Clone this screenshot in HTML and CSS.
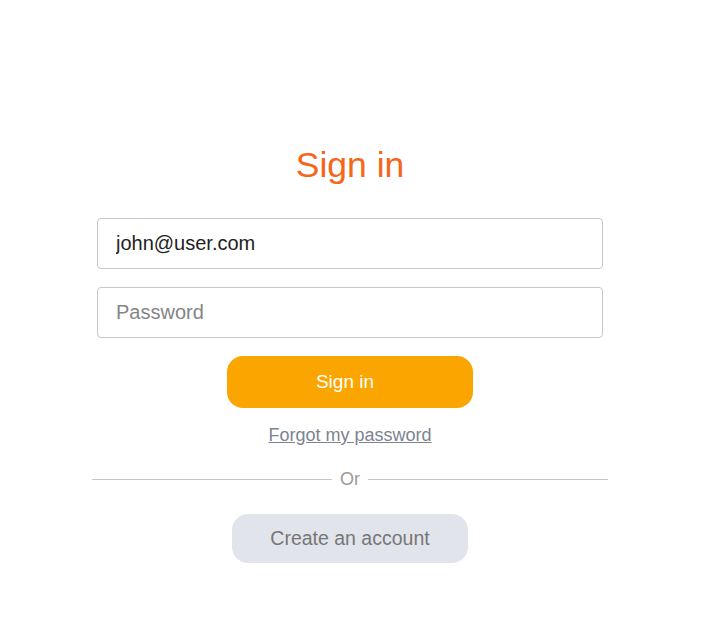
FILE: index.html
```html
<!DOCTYPE html>
<html lang="en">
<head>
  <meta charset="UTF-8">
  <meta name="viewport" content="width=device-width, initial-scale=1.0">
  <title>Sign in</title>
  <link rel="stylesheet" href="styles.css">
</head>
<body>
  <main class="login">
    <h1>Sign in</h1>

    <form class="login-form">
      <input type="email" class="field" value="john@user.com">
      <input type="password" class="field" placeholder="Password">
      <button type="button" class="btn-primary">Sign in</button>
    </form>

    <a href="#" class="forgot">Forgot my password</a>

    <div class="divider"><span>Or</span></div>

    <button type="button" class="btn-secondary">Create an account</button>
  </main>
</body>
</html>
```

FILE: styles.css
```css
body {
  margin: 0;
  font-family: "Liberation Sans", Arial, sans-serif;
  background: #fff;
}

.login {
  width: 516px;
  margin-left: 92px;
  padding-top: 143px;
  display: flex;
  flex-direction: column;
  align-items: center;
}

h1 {
  margin: 0 0 30px;
  font-size: 35.5px;
  font-weight: normal;
  color: #f4661b;
  line-height: 45px;
}

.login-form {
  width: 506px;
  display: flex;
  flex-direction: column;
  align-items: center;
  gap: 18px;
}

.field {
  box-sizing: border-box;
  width: 100%;
  height: 51px;
  padding: 0 18px;
  border: 1px solid #c8c8c8;
  border-radius: 4px;
  font-family: inherit;
  font-size: 20px;
  color: #222;
  outline: none;
}

.field::placeholder {
  color: #858585;
}

.btn-primary {
  width: 246px;
  height: 52px;
  padding: 0 10px 0 0;
  border: none;
  border-radius: 16px;
  background: #faa500;
  color: #fff;
  font-family: inherit;
  font-size: 19px;
}

.forgot {
  margin-top: 17px;
  color: #7c8391;
  font-size: 18px;
  line-height: 20px;
}

.divider {
  width: 100%;
  margin-top: 24px;
  display: flex;
  align-items: center;
  gap: 8px;
  color: #9a9a9a;
  font-size: 18px;
}

.divider::before,
.divider::after {
  content: "";
  flex: 1;
  border-top: 1px solid #c4c4c4;
}

.btn-secondary {
  margin-top: 24px;
  width: 236px;
  height: 49px;
  border: none;
  border-radius: 16px;
  background: #e1e4eb;
  color: #777;
  font-family: inherit;
  font-size: 19.5px;
}
```
